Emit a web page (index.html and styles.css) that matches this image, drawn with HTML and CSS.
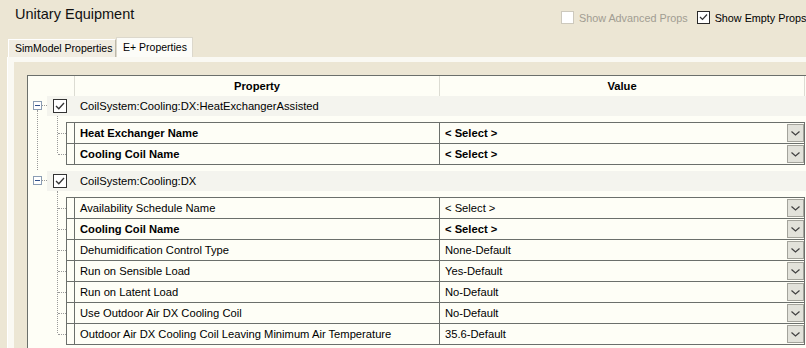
FILE: index.html
```html
<!DOCTYPE html>
<html lang="en">
<head>
  <meta charset="UTF-8" />
  <title>Unitary Equipment</title>
  <link rel="stylesheet" href="styles.css">
</head>
<body>
  <div class="topbar">
    <h1 class="title">Unitary Equipment</h1>
    <div class="options">
      <label class="opt disabled"><span class="box"></span>Show Advanced Props</label>
      <label class="opt"><span class="box"><svg width="11" height="11" viewBox="0 0 11 11"><polyline points="2,5 4.5,7.5 9,2.5" fill="none" stroke="#333" stroke-width="1.2"/></svg></span>Show Empty Props</label>
    </div>
  </div>

  <div class="tabs">
    <div class="tab">SimModel Properties</div>
    <div class="tab active">E+ Properties</div>
  </div>

  <div class="panel">
    <div class="inner">
      <div class="grid">
        <div class="head">
          <div class="head-stub"></div>
          <div class="head-cell">Property</div>
          <div class="head-cell">Value</div>
        </div>

        <div class="group">
          <div class="group-row">
            <span class="expander"></span>
            <div class="group-label">
              <span class="check"><svg width="12" height="12" viewBox="0 0 12 12"><polyline points="2,6 4.8,8.8 10,3" fill="none" stroke="#333" stroke-width="1.3"/></svg></span>
              CoilSystem:Cooling:DX:HeatExchangerAssisted
            </div>
          </div>
          <div class="children">
            <div class="child-row bold">
              <div class="stub"></div>
              <div class="name">Heat Exchanger Name</div>
              <div class="value">&lt; Select &gt;<span class="drop"><svg width="9" height="5" viewBox="0 0 9 5"><polyline points="0.5,0.5 4.5,4 8.5,0.5" fill="none" stroke="#404040" stroke-width="1.2"/></svg></span></div>
            </div>
            <div class="child-row bold">
              <div class="stub"></div>
              <div class="name">Cooling Coil Name</div>
              <div class="value">&lt; Select &gt;<span class="drop"><svg width="9" height="5" viewBox="0 0 9 5"><polyline points="0.5,0.5 4.5,4 8.5,0.5" fill="none" stroke="#404040" stroke-width="1.2"/></svg></span></div>
            </div>
          </div>
        </div>

        <div class="group">
          <div class="group-row">
            <span class="expander"></span>
            <div class="group-label">
              <span class="check"><svg width="12" height="12" viewBox="0 0 12 12"><polyline points="2,6 4.8,8.8 10,3" fill="none" stroke="#333" stroke-width="1.3"/></svg></span>
              CoilSystem:Cooling:DX
            </div>
          </div>
          <div class="children">
            <div class="child-row">
              <div class="stub"></div>
              <div class="name">Availability Schedule Name</div>
              <div class="value">&lt; Select &gt;<span class="drop"><svg width="9" height="5" viewBox="0 0 9 5"><polyline points="0.5,0.5 4.5,4 8.5,0.5" fill="none" stroke="#404040" stroke-width="1.2"/></svg></span></div>
            </div>
            <div class="child-row bold">
              <div class="stub"></div>
              <div class="name">Cooling Coil Name</div>
              <div class="value">&lt; Select &gt;<span class="drop"><svg width="9" height="5" viewBox="0 0 9 5"><polyline points="0.5,0.5 4.5,4 8.5,0.5" fill="none" stroke="#404040" stroke-width="1.2"/></svg></span></div>
            </div>
            <div class="child-row">
              <div class="stub"></div>
              <div class="name">Dehumidification Control Type</div>
              <div class="value">None-Default<span class="drop"><svg width="9" height="5" viewBox="0 0 9 5"><polyline points="0.5,0.5 4.5,4 8.5,0.5" fill="none" stroke="#404040" stroke-width="1.2"/></svg></span></div>
            </div>
            <div class="child-row">
              <div class="stub"></div>
              <div class="name">Run on Sensible Load</div>
              <div class="value">Yes-Default<span class="drop"><svg width="9" height="5" viewBox="0 0 9 5"><polyline points="0.5,0.5 4.5,4 8.5,0.5" fill="none" stroke="#404040" stroke-width="1.2"/></svg></span></div>
            </div>
            <div class="child-row">
              <div class="stub"></div>
              <div class="name">Run on Latent Load</div>
              <div class="value">No-Default<span class="drop"><svg width="9" height="5" viewBox="0 0 9 5"><polyline points="0.5,0.5 4.5,4 8.5,0.5" fill="none" stroke="#404040" stroke-width="1.2"/></svg></span></div>
            </div>
            <div class="child-row">
              <div class="stub"></div>
              <div class="name">Use Outdoor Air DX Cooling Coil</div>
              <div class="value">No-Default<span class="drop"><svg width="9" height="5" viewBox="0 0 9 5"><polyline points="0.5,0.5 4.5,4 8.5,0.5" fill="none" stroke="#404040" stroke-width="1.2"/></svg></span></div>
            </div>
            <div class="child-row">
              <div class="stub"></div>
              <div class="name">Outdoor Air DX Cooling Coil Leaving Minimum Air Temperature</div>
              <div class="value">35.6-Default<span class="drop"><svg width="9" height="5" viewBox="0 0 9 5"><polyline points="0.5,0.5 4.5,4 8.5,0.5" fill="none" stroke="#404040" stroke-width="1.2"/></svg></span></div>
            </div>
          </div>
        </div>
      </div>
    </div>
  </div>
</body>
</html>
```

FILE: styles.css
```css
* {
  box-sizing: border-box;
}

body {
  margin: 0;
  width: 806px;
  height: 348px;
  overflow: hidden;
  background: #ece6d4;
  font-family: "Liberation Sans", Arial, sans-serif;
  font-size: 11px;
  color: #000;
}

/* top bar */
.topbar {
  display: grid;
  grid-template-columns: 546px auto;
  height: 37px;
  padding-left: 15px;
}

.title {
  margin: 0;
  padding-top: 6px;
  font-size: 14.5px;
  font-weight: normal;
  line-height: 17px;
  color: #111;
}

.options {
  display: flex;
  gap: 9px;
  padding-top: 11px;
  font-size: 10.8px;
  white-space: nowrap;
}

.opt {
  display: flex;
  align-items: center;
  gap: 5px;
  height: 13px;
}

.box {
  width: 13px;
  height: 13px;
  border: 1px solid #2a2a2a;
  background: #fff;
  display: flex;
  align-items: center;
  justify-content: center;
}

.opt.disabled {
  color: #a19d92;
}

.opt.disabled .box {
  border-color: #cdc9bd;
}

/* tabs */
.tabs {
  display: flex;
  align-items: flex-end;
  height: 20px;
  padding-left: 8px;
}

.tab {
  width: 108px;
  height: 18px;
  line-height: 16px;
  padding-left: 6px;
  font-size: 10.5px;
  white-space: nowrap;
  background: #f1ede2;
  border: 1px solid #fff;
  border-right-color: #bdb8a9;
  border-bottom: none;
}

.tab.active {
  width: 77px;
  height: 20px;
  line-height: 18px;
  background: #fcfcf8;
  border-color: #dcd8cc;
  border-bottom: none;
}

/* tab page */
.panel {
  margin-left: 7px;
  height: 291px;
  padding: 5px 0 0 6px;
  background: #faf9f3;
  border-left: 1px solid #fff;
}

.inner {
  height: 100%;
  padding: 13px 0 0 13px;
  background: #ece6d4;
}

.grid {
  width: 800px;
  height: 100%;
  font-size: 11.2px;
  background: #fefef6;
  border-top: 1px solid #6b6f6b;
  border-left: 1px solid #6b6f6b;
}

.head {
  display: flex;
  height: 20px;
  line-height: 20px;
  font-weight: bold;
}

.head-stub {
  width: 47px;
  border-right: 1px solid #dcdcd3;
}

.head-cell {
  width: 365px;
  text-align: center;
  border-right: 1px solid #dcdcd3;
}

/* groups */
.group {
  position: relative;
}

.group:not(:last-child)::before {
  content: '';
  position: absolute;
  left: 9px;
  top: 14px;
  bottom: -5px;
  border-left: 1px dotted #9a9a9a;
}

.group-row {
  display: flex;
  height: 20px;
}

.expander {
  position: relative;
  width: 9px;
  height: 9px;
  margin: 5px 5px 0 5px;
  border: 1px solid #8b9db3;
  background: #fff;
}

.expander::before {
  content: '';
  position: absolute;
  left: 1px;
  top: 3px;
  width: 5px;
  height: 1px;
  background: #31508a;
}

.expander::after {
  content: '';
  position: absolute;
  left: 8px;
  top: 3px;
  width: 5px;
  border-top: 1px dotted #9a9a9a;
}

.group-label {
  flex: 1;
  display: flex;
  align-items: center;
  gap: 13px;
  padding-left: 6px;
  background: #f4f4ee;
  white-space: nowrap;
}

.check {
  width: 14px;
  height: 14px;
  border: 1px solid #333;
  background: #fff;
  display: flex;
  align-items: center;
  justify-content: center;
}

/* property rows */
.children {
  position: relative;
  width: 739px;
  margin: 6px 0 6px 38px;
  border-bottom: 1px solid #6b6f6b;
}

.children::before {
  content: '';
  position: absolute;
  left: -9px;
  top: -6px;
  bottom: 11px;
  border-left: 1px dotted #9a9a9a;
}

.child-row {
  position: relative;
  display: flex;
  height: 21px;
  line-height: 20px;
  border-top: 1px solid #6b6f6b;
  border-left: 1px solid #6b6f6b;
  white-space: nowrap;
}

.child-row::before {
  content: '';
  position: absolute;
  left: -9px;
  top: 10px;
  width: 8px;
  border-top: 1px dotted #9a9a9a;
}

.child-row.bold {
  font-weight: bold;
}

.stub {
  width: 8px;
  border-right: 1px solid #6b6f6b;
}

.name {
  width: 365px;
  padding-left: 5px;
  border-right: 1px solid #6b6f6b;
}

.value {
  width: 365px;
  display: flex;
  align-items: center;
  padding-left: 5px;
  border-right: 1px solid #6b6f6b;
}

.drop {
  margin-left: auto;
  width: 17px;
  height: 18px;
  display: flex;
  align-items: center;
  justify-content: center;
  background: #e2e2da;
  border: 1px solid #a3a39b;
}
```
